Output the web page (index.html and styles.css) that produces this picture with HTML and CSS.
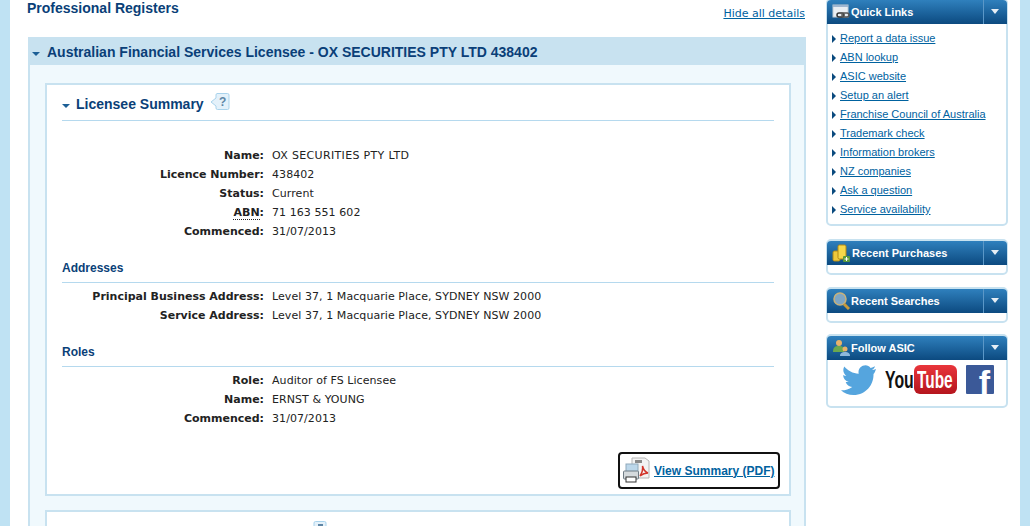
FILE: index.html
```html
<!DOCTYPE html>
<html lang="en">
<head>
  <meta charset="UTF-8" />
  <title>Professional Registers</title>
  <link rel="stylesheet" href="styles.css">
</head>
<body>

<div id="page">
  <div id="main">
    <div class="title-row">
      <h1>Professional Registers</h1>
      <a href="#" class="hide-link">Hide all details</a>
    </div>

    <div class="panel">
      <h2 class="panel-head"><span class="caret"></span>Australian Financial Services Licensee - OX SECURITIES PTY LTD 438402</h2>
      <div class="panel-body">
        <div class="card">
          <h3 class="card-head">
            <span class="caret"></span>Licensee Summary
            <svg class="help" width="20" height="18" viewBox="0 0 20 18">
              <path d="M7 .5h10.500a1.500 1.500 0 0 1 1.500 1.500v13a1.500 1.500 0 0 1-1.500 1.500H7.500a1.500 1.500 0 0 1-1.500-1.500V13L1 9l5-4V2a1.500 1.500 0 0 1 1-1.500z" fill="#e4f1fa" stroke="#a9d3ec"/>
              <text x="9" y="13" class="help-mark">?</text>
            </svg>
          </h3>

          <dl class="details first">
            <dt>Name:</dt><dd class="wide">OX SECURITIES PTY LTD</dd>
            <dt>Licence Number:</dt><dd>438402</dd>
            <dt>Status:</dt><dd>Current</dd>
            <dt><span class="abbr">ABN</span>:</dt><dd>71 163 551 602</dd>
            <dt>Commenced:</dt><dd>31/07/2013</dd>
          </dl>

          <h4>Addresses</h4>
          <dl class="details">
            <dt>Principal Business Address:</dt><dd>Level 37, 1 Macquarie Place, SYDNEY NSW 2000</dd>
            <dt>Service Address:</dt><dd>Level 37, 1 Macquarie Place, SYDNEY NSW 2000</dd>
          </dl>

          <h4>Roles</h4>
          <dl class="details">
            <dt>Role:</dt><dd>Auditor of FS Licensee</dd>
            <dt>Name:</dt><dd>ERNST &amp; YOUNG</dd>
            <dt>Commenced:</dt><dd>31/07/2013</dd>
          </dl>

          <div class="pdf-row">
            <a href="#" class="pdf-btn">
              <svg width="27" height="27" viewBox="0 0 27 27">
                <path d="M9 1h13l4 3v17H9z" fill="#f3f3f3" stroke="#b5b5b5"/>
                <rect x="12" y="3" width="7" height="3" fill="#8a8a8a"/>
                <path d="M17 19c2-3 3-7 2.500-10 1 4 2.500 6 5.500 7-3 0-5 .5-8 3z" fill="none" stroke="#d2352b" stroke-width="1.500"/>
                <rect x="3" y="7" width="12" height="9" fill="#bcd7ea" stroke="#8fa9bb"/>
                <rect x="0.500" y="14" width="15" height="8" rx="1" fill="#d5dadd" stroke="#6f7b84"/>
                <rect x="3" y="20" width="10" height="5" fill="#fff" stroke="#333"/>
              </svg>
              <span>View Summary (PDF)</span>
            </a>
          </div>
        </div>

        <div class="card next">
          <svg class="next-help" width="14" height="6" viewBox="0 0 14 6">
            <path d="M1 6V2a1.500 1.500 0 0 1 1.500-1.500h9A1.500 1.500 0 0 1 13 2v4" fill="#e4f1fa" stroke="#a9d3ec"/>
            <rect x="5" y="3" width="5" height="3" fill="#5f86a6"/>
          </svg>
        </div>
      </div>
    </div>
  </div>

  <div id="side">
    <div class="box quick">
      <div class="box-head">
        <svg width="18" height="20" viewBox="0 0 18 20">
          <rect x="1" y="3" width="15" height="12" fill="#e9eef3" stroke="#c3ccd4"/>
          <rect x="1" y="3" width="15" height="2" fill="#9fb6d0"/>
          <rect x="5" y="11" width="7" height="4" rx="2" fill="none" stroke="#333" stroke-width="1.500"/>
          <rect x="10" y="11" width="7" height="4" rx="2" fill="none" stroke="#555" stroke-width="1.500"/>
        </svg>
        <span class="box-title">Quick Links</span>
        <span class="box-toggle"></span>
      </div>
      <ul class="links">
        <li><a href="#">Report a data issue</a></li>
        <li><a href="#">ABN lookup</a></li>
        <li><a href="#">ASIC website</a></li>
        <li><a href="#">Setup an alert</a></li>
        <li><a href="#">Franchise Council of Australia</a></li>
        <li><a href="#">Trademark check</a></li>
        <li><a href="#">Information brokers</a></li>
        <li><a href="#">NZ companies</a></li>
        <li><a href="#">Ask a question</a></li>
        <li><a href="#">Service availability</a></li>
      </ul>
    </div>

    <div class="box closed purchases">
      <div class="box-head">
        <svg class="coins" width="19" height="20" viewBox="0 0 19 20">
          <rect x="1" y="8" width="7" height="10" rx="1.500" fill="#f0c93c" stroke="#b48a14"/>
          <rect x="6" y="2" width="8" height="14" rx="1.500" fill="#f6d84a" stroke="#b48a14"/>
          <rect x="11" y="13" width="7" height="6" rx="1" fill="#5b9a3c"/>
          <path d="M14.500 14v4M12.500 16h4" stroke="#fff"/>
        </svg>
        <span class="box-title">Recent Purchases</span>
        <span class="box-toggle"></span>
      </div>
    </div>

    <div class="box closed">
      <div class="box-head">
        <svg width="18" height="20" viewBox="0 0 18 20">
          <circle cx="8" cy="8" r="6" fill="#7fa6c4" stroke="#c9b27a" stroke-width="1.500"/>
          <path d="M12 13l5 5" stroke="#c89a3c" stroke-width="3"/>
        </svg>
        <span class="box-title">Recent Searches</span>
        <span class="box-toggle"></span>
      </div>
    </div>

    <div class="box follow">
      <div class="box-head">
        <svg width="18" height="20" viewBox="0 0 18 20">
          <circle cx="7" cy="5" r="3" fill="#e8b26a"/>
          <path d="M1 14c0-5 2-6 6-6s5 1 5 6z" fill="#6aa84f"/>
          <circle cx="13" cy="11" r="2.500" fill="#e8b26a"/>
          <path d="M8 18c0-3 2-4 5-4s5 1 5 4z" fill="#8db8dc"/>
        </svg>
        <span class="box-title">Follow ASIC</span>
        <span class="box-toggle"></span>
      </div>
      <div class="social">
        <svg width="37" height="30" viewBox="0 0 35 30">
          <path d="M35 4c-1.300.6-2.700 1-4 1.100 1.400-.9 2.500-2.200 3-3.800-1.400.8-2.800 1.400-4.400 1.700C28.300 1.200 26.500.3 24.500.3c-3.900 0-7 3.100-7 6.900 0 .6.100 1.100.2 1.600C11.900 8.500 6.700 5.700 3.300 1.500c-.6 1-1 2.200-1 3.500 0 2.400 1.200 4.600 3.100 5.800-1.100 0-2.200-.3-3.200-.9v.1c0 3.400 2.400 6.200 5.600 6.900-.6.200-1.200.2-1.800.2-.5 0-.9 0-1.300-.1.900 2.800 3.500 4.800 6.500 4.900C8 24 4.500 25.300.6 25.300H0C3 28.300 7.500 30 12.500 30c12.900 0 20-10.700 20-20v-1c1-.7 1.900-3 2.500-5z" fill="#55a5de"/>
        </svg>
        <div class="yt">
          <div class="yt-you"><span>You</span></div>
          <div class="yt-tube"><span>Tube</span></div>
        </div>
        <div class="fb">f</div>
      </div>
    </div>
  </div>
</div>

</body>
</html>
```

FILE: styles.css
```css
html, body {
  height: 526px;
  margin: 0;
  overflow: hidden;
  background: #bfe2f3;
  font-family: "DejaVu Sans", sans-serif;
  font-size: 11px;
  color: #222;
}

#page {
  display: flex;
  height: 526px;
  margin: 0 10px;
  background: #fff;
  overflow: hidden;
}

#main {
  flex: none;
  width: 778px;
  padding-left: 17px;
  margin-right: 21px;
}

.title-row {
  display: flex;
  justify-content: space-between;
  height: 37px;
}

h1 {
  margin: 0;
  font: bold 14px/16px "Liberation Sans", sans-serif;
  color: #0a3f78;
}

.hide-link {
  margin-top: 6px;
  height: 14px;
  font-size: 11px;
  line-height: 15px;
  color: #00629f;
}

.panel {
  margin-left: 1px;
  width: 778px;
  border: solid #c8e2f0;
  border-width: 0 2px;
  box-sizing: border-box;
  background: #f0f9fd;
}

.panel-head {
  margin: 0 -2px;
  height: 28px;
  background: #c8e2f0;
  font: bold 14px/28px "Liberation Sans", sans-serif;
  color: #0a3f78;
  padding: 1px 0 0 4px;
  box-sizing: border-box;
  display: flex;
  align-items: center;
}

.caret {
  display: inline-block;
  width: 0;
  height: 0;
  border: 4px solid transparent;
  border-top-color: #1c5f96;
  border-bottom: 0;
  margin-top: 5px;
  margin-right: 7px;
}

.panel-body {
  padding: 18px 13px 0 15px;
}

.card {
  border: 2px solid #c8e2f0;
  background: #fff;
  height: 409px;
  padding: 0 15px;
}

.card.next {
  height: 40px;
  margin-top: 14px;
  position: relative;
}

.next-help {
  position: absolute;
  left: 266px;
  top: 9px;
}

.card-head {
  margin: 0;
  height: 33px;
  padding-top: 2px;
  display: flex;
  align-items: center;
  border-bottom: 1px solid #b5d9ee;
  font: bold 14px "Liberation Sans", sans-serif;
  color: #0a3f78;
}

.card-head .caret {
  margin-right: 6px;
}

.help {
  margin-left: 6px;
  margin-top: -3px;
}

.help-mark {
  font: bold 12px "Liberation Sans", sans-serif;
  fill: #5f86a6;
}

h4 {
  margin: 0;
  height: 23px;
  font: bold 12px/18px "Liberation Sans", sans-serif;
  color: #0a3f78;
  border-bottom: 1px solid #b5d9ee;
}

.details {
  display: grid;
  grid-template-columns: 202px 1fr;
  column-gap: 8px;
  margin: 4px 0 18px;
  line-height: 19px;
}

.details.first {
  margin: 25px 0 18px;
}

dt {
  text-align: right;
  font-weight: bold;
}

dd {
  margin: 0;
  letter-spacing: 0.07px;
}

dd.wide {
  letter-spacing: 0.33px;
}

.abbr {
  border-bottom: 1px dotted #222;
}

.pdf-row {
  display: flex;
  justify-content: flex-end;
  margin: 24px -6px 0 0;
}

.pdf-btn {
  display: flex;
  align-items: center;
  gap: 4px;
  width: 162px;
  height: 37px;
  box-sizing: border-box;
  padding-left: 3px;
  border: 2px solid #111;
  border-radius: 4px;
  color: #00629f;
  font: bold 12px "Liberation Sans", sans-serif;
  white-space: nowrap;
}

.pdf-btn svg {
  flex: none;
}

#side {
  flex: none;
  width: 182px;
}

.box {
  border: 2px solid #c8e2f0;
  border-radius: 5px;
  background: #fff;
  margin-bottom: 11px;
  box-sizing: border-box;
}

.box.quick {
  margin-top: -2px;
  margin-bottom: 13px;
}

.box.closed {
  height: 36px;
}

.box.purchases {
  margin-bottom: 12px;
}

.box-head {
  display: flex;
  align-items: center;
  height: 24px;
  margin: 0 -1px;
  background: linear-gradient(#2f80bd, #0c4a80);
  border-radius: 4px 4px 0 0;
  color: #fff;
  padding-left: 5px;
}

.box-title {
  flex: 1;
  font: bold 11px "Liberation Sans", sans-serif;
  margin-left: 1px;
}

.box-toggle {
  width: 23px;
  height: 100%;
  border-left: 1px solid #5b97c7;
  position: relative;
}

.box-toggle::after {
  content: "";
  position: absolute;
  left: 7px;
  top: 9px;
  border: 4px solid transparent;
  border-top: 5px solid #e6eef5;
  border-bottom: 0;
}

.links {
  list-style: none;
  margin: 0;
  padding: 5px 0 5px 4px;
}

.links li {
  height: 19px;
  font: 11px/19px "Liberation Sans", sans-serif;
  padding-left: 8px;
  position: relative;
}

.links li::before {
  content: "";
  position: absolute;
  left: 0;
  top: 6px;
  border: 4px solid transparent;
  border-left: 4px solid #0a4a7e;
  border-right: 0;
}

.links a {
  color: #00629f;
}

.social {
  display: flex;
  align-items: flex-start;
  height: 46px;
  box-sizing: border-box;
  padding: 5px 0 0 12px;
}

.social svg {
  flex: none;
}

.yt {
  display: flex;
  margin-left: 8px;
  font: bold 22px/29px "Liberation Sans", sans-serif;
}

.yt-you {
  width: 29px;
  color: #111;
}

.yt-you span,
.yt-tube span {
  display: block;
  transform-origin: 0 50%;
  white-space: nowrap;
}

.yt-you span {
  transform: scale(0.72, 1.1);
}

.yt-tube {
  width: 43px;
  height: 29px;
  background: linear-gradient(#e9353b, #b5151d);
  color: #fff;
  border-radius: 6px;
  padding-left: 3px;
  box-sizing: border-box;
}

.yt-tube span {
  transform: scale(0.7, 1.1);
}

.fb {
  width: 28px;
  height: 29px;
  margin-left: 9px;
  background: #3b5998;
  border-radius: 1px;
  color: #fff;
  font: bold 34px/34px "Liberation Sans", sans-serif;
  text-align: right;
  padding-right: 4px;
  box-sizing: border-box;
}
```
